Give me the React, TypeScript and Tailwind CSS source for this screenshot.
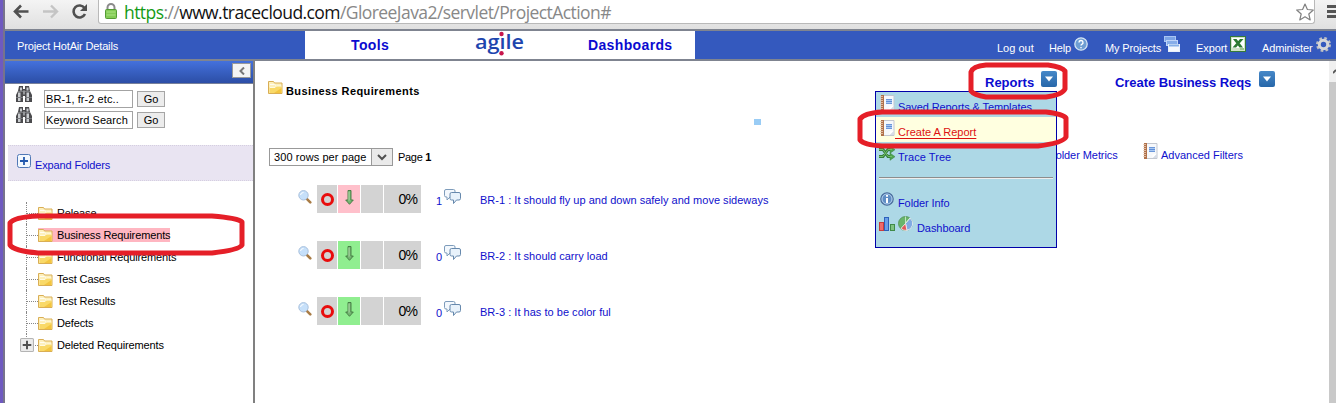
import React from "react";

const sans = "font-['Liberation_Sans',Arial,sans-serif] whitespace-nowrap";
const t11 = "text-[11px] leading-[12px]";

function Folder() {
  return (
    <svg width="15" height="13" viewBox="0 0 15 13" className="block shrink-0">
      <path d="M.5 12.500V.5h5l1 1.500h7.500v10.500z" fill="#fdf0bd" stroke="#d9ae55" />
      <path d="M2 3.500h4.500l1.500 1" fill="none" stroke="#fffdf0" />
      <path d="M1.500 12V6.500H7L8.500 5h5v7z" fill="#f9d968" />
      <path d="M6 12L13.500 7v5z" fill="#f3c53f" />
      <path d="M2 6.500h5L8.500 5h5" fill="none" stroke="#fffbe2" />
    </svg>
  );
}

function Notebook() {
  return (
    <svg width="15" height="16" viewBox="0 0 15 16" className="block shrink-0">
      <path d="M3.500.5h10.500v15H3.500z" fill="#f6f8fb" stroke="#c3c7d0" />
      <path d="M14 10.500L9.500 15H14z" fill="#d6dce6" />
      <path d="M14 10.500L9.500 15v-3.500z" fill="#fff" />
      <rect x="1" y="0" width="3" height="16" fill="#b0714a" />
      <path d="M0 1.500h3M0 3.500h3M0 5.500h3M0 7.500h3M0 9.500h3M0 11.500h3M0 13.500h3" stroke="#e8cdb8" strokeWidth=".8" />
      <path d="M6 4.500h6M6 8.500h6" stroke="#6c97da" />
      <path d="M6 5h6v3H6z" fill="#a8c8f2" />
      <path d="M6 6.500h6" stroke="#5f8ed8" />
    </svg>
  );
}

function Binoculars() {
  return (
    <svg width="16" height="17" viewBox="0 0 16 17" className="block shrink-0">
      <path d="M3 0h4v3h2V0h4l1 5 2 4v7H9v-6H7v6H0V9l2-4z" fill="#4b4b4e" />
      <path d="M4 1.500h2v3H4zM10.500 1.500h2v3h-2zM2 6.500h2.500V15H2zM10.500 6.500H13V15h-2.500z" fill="#c9cccf" />
      <path d="M7 4.500h2v4H7z" fill="#97999c" />
      <path d="M0 11.500h7M9 11.500h7M2 5.500h5M9 5.500h5" stroke="#77797d" />
    </svg>
  );
}

function Magnifier() {
  return (
    <svg width="14" height="14" viewBox="0 0 14 14" className="block shrink-0">
      <path d="M8.800 8.800l3.500 3.500" stroke="#a97c46" strokeWidth="2.600" strokeLinecap="round" />
      <circle cx="5.500" cy="5.300" r="4.700" fill="#c6e0fa" stroke="#a9c0dc" />
      <path d="M2.500 5a3 3 0 0 1 3-2.500" stroke="#fff" fill="none" />
    </svg>
  );
}

function Chat() {
  return (
    <svg width="17" height="16" viewBox="0 0 17 16" className="block shrink-0">
      <path d="M2 .5h7.500Q11 .5 11 2v4.500Q11 8 9.500 8H6l-3 3V8H2Q.5 8 .5 6.500V2Q.5.5 2 .5z" fill="#f3f8fd" stroke="#7e9cbb" />
      <path d="M7.500 3.500H15q1.500 0 1.500 1.500v4.500q0 1.500-1.500 1.500h-2.500l-3 3.500V11h-2Q6 11 6 9.500V5q0-1.500 1.500-1.500z" fill="#e8f2fb" stroke="#6789ad" />
    </svg>
  );
}

function DownArrow() {
  return (
    <svg width="9" height="15" viewBox="0 0 9 15" className="block">
      <path d="M3 .5h3v9.500h2.300L4.500 14.300.7 10H3z" fill="#74b572" stroke="#427640" strokeWidth=".9" />
      <path d="M4 1.500v9" stroke="#b5dcae" />
    </svg>
  );
}

function DropButton() {
  return (
    <span className="flex h-4 w-4 items-center justify-center rounded-[2px] bg-gradient-to-b from-[#4688c8] to-[#2767a9]">
      <svg width="8" height="6" viewBox="0 0 8 6">
        <path d="M0 .5h8L4 5.500z" fill="#fff" />
      </svg>
    </span>
  );
}

function BrowserBar() {
  return (
    <div className="flex h-[29px] shrink-0 items-start bg-gradient-to-b from-[#f4f4f4] to-[#e0e0e0]">
      <svg width="93" height="24" viewBox="5 0 93 24" className="block shrink-0" fill="none">
        <path d="M28.500 11.500H15.500M21 5.500l-6 6 6 6" stroke="#505050" strokeWidth="2.600" />
        <path d="M43 11.500h13M51 5.500l6 6-6 6" stroke="#c4c4c4" strokeWidth="2.400" />
        <path d="M84.500 8A6 6 0 1 0 85 14" stroke="#505050" strokeWidth="2.600" />
        <path d="M87 4v7h-7z" fill="#505050" />
      </svg>
      <div className="flex h-6 w-[1217px] shrink-0 items-start rounded-b-[3px] border-x border-b border-[#b9b9b9] bg-white">
        <svg width="12" height="16" viewBox="0 0 12 16" className="ml-[6px] mt-[3px] block shrink-0">
          <path d="M2.500 7V4.500a3.500 3.500 0 0 1 7 0V7" fill="none" stroke="#8b8b8b" strokeWidth="2" />
          <rect x=".5" y="6.500" width="11" height="9" rx="1" fill="#83cb55" stroke="#549b35" />
          <path d="M1.500 9h9M1.500 12h9" stroke="#aae283" />
        </svg>
        <div className="ml-[7px] h-6 w-[1172px] whitespace-nowrap font-['Open_Sans','Noto_Sans',sans-serif] text-[17.500px] leading-6 tracking-[-0.570px] text-[#888]">
          <span className="text-[#159a15]">https</span>://<span className="text-[#111]">www.tracecloud.com</span>/GloreeJava2/servlet/ProjectAction#
        </div>
        <svg width="18" height="18" viewBox="0 0 18 18" className="mt-[3px] block shrink-0">
          <path d="M9 1l2.400 5.500 5.900.5-4.500 4 1.400 5.900L9 13.800 3.800 16.900l1.400-5.900L.7 7l5.900-.5z" fill="#fff" stroke="#808080" strokeWidth="1.200" strokeLinejoin="round" />
        </svg>
      </div>
      <div className="ml-[12px] mt-[5px] flex flex-col gap-[2px]">
        <div className="h-[3px] w-[9px] bg-[#555]" />
        <div className="h-[3px] w-[9px] bg-[#555]" />
        <div className="h-[3px] w-[9px] bg-[#555]" />
      </div>
    </div>
  );
}

function Header() {
  const label = "text-[11px] leading-[12px] mt-[11px] block text-white";
  return (
    <div className={`${sans} flex h-[32px] shrink-0 items-start border-y-2 border-[#7f8490] bg-[#3459be]`}>
      <div className="w-[300px] pl-3 pt-[9px] text-[11px] leading-[12px] tracking-[-0.160px] text-white">Project HotAir Details</div>
      <div className="flex h-7 w-[390px] items-start bg-white text-[14px] font-bold leading-4 text-[#0b0bd0]">
        <span className="ml-[46px] mt-[6px] w-[124px] tracking-[0.400px]">Tools</span>
        <svg width="54" height="28" viewBox="0 0 54 28" className="block shrink-0 overflow-visible">
          <text x="0" y="18" fontFamily="Open Sans, sans-serif" fontSize="20" fontWeight="600" fill="#1d45ae" textLength="49" lengthAdjust="spacingAndGlyphs">agıle</text>
          <circle cx="26.500" cy="3" r="2.200" fill="#c8164c" />
          <circle cx="26.500" cy="22.300" r="2.200" fill="#c8164c" />
        </svg>
        <span className="ml-[59px] mt-[6px] tracking-[0.360px]">Dashboards</span>
      </div>
      <div className="flex items-start pl-[302px]">
        <span className={`${label} w-[52px]`}>Log out</span>
        <span className={`${label} w-[25px] tracking-[-0.200px]`}>Help</span>
        <svg width="14" height="14" viewBox="0 0 14 14" className="mt-[6px] block">
          <circle cx="7" cy="7" r="6.200" fill="#6f9ed3" stroke="#d7e6f5" strokeWidth="1.300" />
          <path d="M5 5.500a2 2 0 1 1 2.800 1.800Q7 7.700 7 8.500M7 10v1.200" fill="none" stroke="#fff" strokeWidth="1.400" />
        </svg>
        <span className={`${label} ml-[17px] w-[59px] tracking-[-0.120px]`}>My Projects</span>
        <svg width="16" height="16" viewBox="0 0 16 16" className="mt-[5px] block">
          <rect x=".5" y=".5" width="11" height="5" fill="#7ca4e6" stroke="#a9c5f4" />
          <rect x="2.500" y="4.500" width="11" height="5" fill="#86ade9" stroke="#bfd4f8" />
          <rect x="4.500" y="8.500" width="11" height="7" fill="#f4f8fd" stroke="#e8effa" />
          <path d="M5 9.500h10" stroke="#86b0e8" strokeWidth="2" />
        </svg>
        <span className={`${label} ml-[16px] w-[34px] tracking-[-0.100px]`}>Export</span>
        <svg width="16" height="16" viewBox="0 0 16 16" className="mt-[5px] block">
          <rect x=".5" y=".5" width="15" height="15" fill="#cfe3c6" stroke="#377a39" />
          <path d="M2 2h12v10H2z" fill="#fff" />
          <path d="M3 3h3.500L13 11.500H9.500zM10 3h3.500L6 11.500H2.500z" fill="#2c7a31" />
          <path d="M10 12h4v2h-4z" fill="#9dc58f" />
        </svg>
        <span className={`${label} ml-4 w-[54px] tracking-[-0.150px]`}>Administer</span>
        <svg width="15" height="15" viewBox="0 0 15 15" className="mt-[6px] block" fill="none">
          <circle cx="7.500" cy="7.500" r="6.200" stroke="#bfc0c3" strokeWidth="2.600" strokeDasharray="2.600 2.270" />
          <circle cx="7.500" cy="7.500" r="4.200" stroke="#d4d5d8" strokeWidth="3" />
        </svg>
      </div>
    </div>
  );
}

const folders = ["Release", "Business Requirements", "Functional Requirements", "Test Cases", "Test Results", "Defects", "Deleted Requirements"];

function SearchRow({ value }: { value: string }) {
  return (
    <div className="flex h-[21px] items-start">
      <Binoculars />
      <div className="ml-3 mt-[4px] h-[18px] w-[89px] overflow-hidden border border-[#a3a3a3] pl-[1px] text-[11px] leading-[16px] tracking-[0.080px] text-black">{value}</div>
      <div className="ml-1 mt-[5px] h-4 w-7 border border-[#a5a5a5] bg-[#ececec] text-center text-[11px] leading-[15px] text-black">Go</div>
    </div>
  );
}

function Sidebar() {
  return (
    <div className={`${sans} flex h-[342px] w-[250px] shrink-0 flex-col border-r-2 border-[#808080] bg-white`}>
      <div className="flex h-[23px] items-start justify-end border-b border-[#77809a] bg-gradient-to-b from-[#4471dc] to-[#2c4ea6] pr-[2px] pt-[2px]">
        <div className="flex h-[15px] w-[19px] items-center justify-center border border-[#999] bg-[#f4f4f4]">
          <svg width="6" height="8" viewBox="0 0 6 8"><path d="M5 .5L1.500 4 5 7.500" fill="none" stroke="#777" strokeWidth="2" /></svg>
        </div>
      </div>
      <div className="flex h-[61px] flex-col pl-[11px] pt-[2px]">
        <SearchRow value="BR-1, fr-2 etc.." />
        <SearchRow value="Keyword Search" />
      </div>
      <div className="ml-[3px] flex h-9 items-start border-y border-dotted border-[#d5cfe0] bg-[#e9e4f2] pl-[9px]">
        <svg width="14" height="14" viewBox="0 0 14 14" className="mt-[8px] block">
          <rect x=".5" y=".5" width="13" height="13" rx="2" fill="#f3f8fe" stroke="#5078b6" />
          <path d="M7 3v8M3 7h8" stroke="#2459ad" strokeWidth="1.800" />
        </svg>
        <span className={`${t11} ml-1 mt-[13px] tracking-[-0.130px] text-[#1010cc]`}>Expand Folders</span>
      </div>
      <div className="mt-[21px] flex flex-col pl-[15px]">
        {folders.map((name, i) => (
          <div key={name} className="flex h-[22px] items-center">
            <div className="relative flex h-[22px] w-[18px] shrink-0 items-center">
              <div className={i === 6 ? "ml-[6px] h-[11px] w-px self-start border-l border-dotted border-[#888]" : "ml-[6px] h-[22px] w-px border-l border-dotted border-[#888]"} />
              <div className="h-px w-[11px] border-t border-dotted border-[#888]" />
              {i === 6 && (
                <svg width="14" height="14" viewBox="0 0 13 13" className="absolute left-0 top-1">
                  <rect x=".5" y=".5" width="12" height="12" rx="1" fill="#ececec" stroke="#b4b4b4" />
                  <path d="M6.500 2.500v8M2.500 6.500h8" stroke="#505050" strokeWidth="1.800" />
                </svg>
              )}
            </div>
            <div className={i === 1 ? "flex h-[14px] items-center bg-[#ffb6c1]" : "flex h-[14px] items-center"}>
              <Folder />
              <span className={`${t11} ml-1 tracking-[-0.130px] text-black`}>{name}</span>
            </div>
          </div>
        ))}
      </div>
    </div>
  );
}

const requirements = [
  { n: "1", title: "BR-1 : It should fly up and down safely and move sideways", hot: true },
  { n: "0", title: "BR-2 : It should carry load", hot: false },
  { n: "0", title: "BR-3 : It has to be color ful", hot: false },
];

function RequirementRow({ n, title, hot }: { n: string; title: string; hot: boolean }) {
  return (
    <div className="flex h-[56px] items-start pl-[43px]">
      <div className="mt-[5px] w-[19px]"><Magnifier /></div>
      <div className="flex h-7 w-[119px] gap-px">
        <div className="flex w-5 items-center justify-center bg-[#d3d3d3]">
          <div className="h-[13px] w-[13px] rounded-full border-[3px] border-[#e80c0c]" />
        </div>
        <div className={hot ? "flex w-[22px] justify-center bg-[#ffc0cb] pt-[5px]" : "flex w-[22px] justify-center bg-[#90ee90] pt-[5px]"}><DownArrow /></div>
        <div className="w-[22px] bg-[#d3d3d3]" />
        <div className="w-[37px] bg-[#d3d3d3] pr-1 text-right text-[14px] leading-[28px] tracking-[-0.900px] text-black">0%</div>
      </div>
      <span className={`${t11} mt-[10px] w-[8px] text-[#1010cc]`}>{n}</span>
      <div className="mt-[4px] w-9"><Chat /></div>
      <span className={`${t11} mt-[9px] tracking-[0.020px] text-[#1010cc]`}>{title}</span>
    </div>
  );
}

function ReportsMenu() {
  const link = "text-[11px] leading-[12px] text-[#1010cc]";
  return (
    <div className="absolute left-[620px] top-[30px] flex h-[157px] w-[182px] flex-col border border-[#0000a8] bg-[#add8e6]">
      <div className="flex h-[25px] shrink-0 items-start pl-1 pt-[3px]"><Notebook /><span className={`${link} ml-[3px] mt-[6px] tracking-[-0.090px]`}>Saved Reports &amp; Templates</span></div>
      <div className="flex h-[25px] shrink-0 items-start bg-[#ffffe0] pl-1 pt-[3px]"><Notebook /><span className="mt-[6px] whitespace-pre text-[11px] leading-[12px] text-[#dd1111] underline underline-offset-2"> Create A Report</span></div>
      <div className="flex h-[25px] shrink-0 items-start pl-[3px] pt-[4px]">
        <svg width="16" height="15" viewBox="0 0 16 15" className="block" fill="none">
          <path d="M0 3.500h4l5 7h4M0 10.500h4l5-7h4" stroke="#37803c" strokeWidth="3" />
          <path d="M11 0l5 3.700-5 3.600zM11 7l5 3.700-5 3.600z" fill="#4ea64f" stroke="#37803c" strokeWidth=".5" />
          <path d="M0 3.500h4l5 7h4M0 10.500h4l5-7h4" stroke="#70bc69" />
        </svg>
        <span className={`${link} ml-[3px] mt-[5px] tracking-[0.050px]`}>Trace Tree</span>
      </div>
      <div className="mx-[3px] mt-[10px] h-[2px] shrink-0 border-b border-t border-b-[#eee] border-t-[#8d8d8d]" />
      <div className="mt-[13px] flex h-[25px] shrink-0 items-start pl-1">
        <svg width="14" height="14" viewBox="0 0 14 14" className="block">
          <circle cx="7" cy="7" r="6.200" fill="#5f8dc4" stroke="#4c6e9c" strokeWidth="1.200" />
          <circle cx="7" cy="7" r="5" fill="none" stroke="#b5d1ee" />
          <path d="M7 3v1.800M7 6v5" stroke="#fff" strokeWidth="2" />
        </svg>
        <span className={`${link} ml-1 mt-[5px] tracking-[-0.100px]`}>Folder Info</span>
      </div>
      <div className="flex items-start pl-[3px]">
        <svg width="16" height="14" viewBox="0 0 16 14" className="block">
          <rect x=".5" y="5.500" width="4" height="8" fill="#ef6a6a" stroke="#c93c3c" />
          <rect x="5.500" y=".5" width="4" height="13" fill="#6a9fe8" stroke="#2c62bb" />
          <rect x="11.500" y="7.500" width="4" height="6" fill="#7fc382" stroke="#408a48" />
        </svg>
        <svg width="15" height="15" viewBox="0 0 15 15" className="ml-[3px] -mt-px block">
          <circle cx="7.500" cy="7.500" r="7" fill="#69b56b" stroke="#519256" strokeWidth=".8" />
          <path d="M7.500 7.500L12 2a7 7 0 0 1-3 12.400z" fill="#80abe2" stroke="#f3f7fb" strokeWidth=".8" />
          <path d="M7.500 7.500L9 14.400a7 7 0 0 1-6-2z" fill="#e1585a" stroke="#f3f7fb" strokeWidth=".8" />
          <path d="M7.500 7.500V.5M7.500 7.500L12 2" stroke="#d9efd8" strokeWidth=".8" />
        </svg>
        <span className={`${link} ml-1 mt-[5px] tracking-[-0.070px]`}>Dashboard</span>
      </div>
    </div>
  );
}

function Content() {
  return (
    <div className={`${sans} relative flex h-[342px] w-[1074px] shrink-0 flex-col bg-white`}>
      <div className="flex h-[58px] items-start">
        <div className="ml-[13px] mt-[20px]"><Folder /></div>
        <span className="ml-[3px] mt-[24px] w-[699px] text-[11px] font-bold leading-[12px] tracking-[0.400px] text-black">Business Requirements</span>
        <span className="mt-[14px] w-[56px] text-[13px] font-bold leading-[15px] text-[#0b0bd0]">Reports</span>
        <div className="mt-[10px]"><DropButton /></div>
        <span className="ml-[58px] mt-[14px] w-[144px] text-[13px] font-bold leading-[15px] tracking-[-0.050px] text-[#0b0bd0]">Create Business Reqs</span>
        <div className="mt-[10px]"><DropButton /></div>
      </div>
      <div className="ml-[499px] h-[6px] w-[7px] bg-[#99ccf5]" />
      <div className="flex h-[60px] items-start pl-[14px] pt-[18px]">
        <div className="mt-[5px] flex h-[18px] w-[124px] shrink-0 border border-[#999] text-black">
          <span className="w-[101px] pl-1 text-[11px] leading-[16px] tracking-[0.080px]">300 rows per page</span>
          <span className="flex w-[21px] items-center justify-center border-l border-[#999] bg-[#eaeaea]">
            <svg width="10" height="7" viewBox="0 0 10 7"><path d="M1 1l4 4 4-4" fill="none" stroke="#505050" strokeWidth="2" /></svg>
          </span>
        </div>
        <span className={`${t11} ml-[5px] mt-[8px] w-[651px] shrink-0 tracking-[-0.300px] text-black`}>Page <b>1</b></span>
        <span className={`${t11} mt-[6px] w-[94px] shrink-0 tracking-[-0.070px] text-[#1010cc]`}>Folder Metrics</span>
        <div className="w-[18px]"><Notebook /></div>
        <span className={`${t11} mt-[6px] text-[#1010cc]`}>Advanced Filters</span>
      </div>
      {requirements.map((r) => <RequirementRow key={r.title} {...r} />)}
      <ReportsMenu />
    </div>
  );
}

export default function App() {
  return (
    <div className="relative flex h-[403px] w-[1336px] overflow-hidden bg-white">
      <div className="h-full w-[5px] shrink-0 border-r-2 border-[#77738c] bg-[#6f5ac0]" />
      <div className="flex w-[1331px] shrink-0 flex-col">
        <BrowserBar />
        <Header />
        <div className="flex">
          <Sidebar />
          <Content />
          <div className="h-[342px] w-[7px] shrink-0 bg-[#c9c9c9]">
            <div className="flex h-[21px] items-center justify-end bg-[#f0f0f0]">
              <svg width="3" height="5" viewBox="0 0 3 5"><path d="M0 4l3-3" stroke="#555" strokeWidth="1.800" /></svg>
            </div>
          </div>
        </div>
      </div>
      <svg width="1336" height="403" viewBox="0 0 1336 403" className="pointer-events-none absolute left-0 top-0" fill="none" stroke="#e51f28" strokeWidth="5" strokeLinejoin="round">
        <path d="M38 216h174q26 2 30 6v23q-3 5-30 8H38q-24-2-28-8v-22q4-6 28-7z" />
        <path d="M986 65h62q14 2 17 6v18q-3 6-19 8h-60q-12-2-15-6V72q2-6 15-7z" />
        <path d="M882 112h164q17 2 20 6v19q-3 6-28 9H882q-18-1-22-6v-21q4-6 22-7z" />
      </svg>
    </div>
  );
}
